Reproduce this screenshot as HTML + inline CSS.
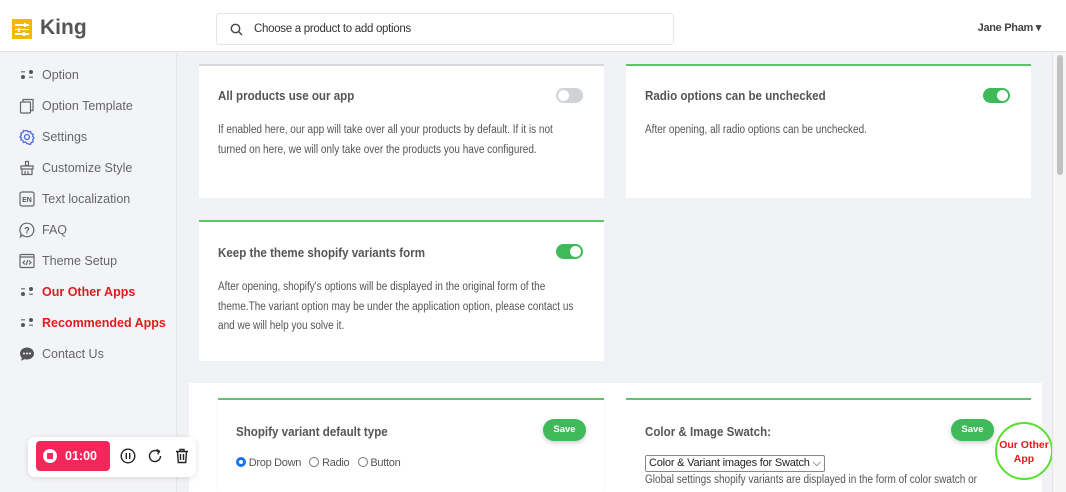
<!DOCTYPE html>
<html><head><style>
*{box-sizing:border-box;margin:0;padding:0}
body{width:1066px;height:492px;overflow:hidden;font-family:"Liberation Sans",Arial,sans-serif;background:#f1f2f6;position:relative;color:#555}
.hdr{position:absolute;left:0;top:0;width:1066px;height:52px;background:#fff;border-bottom:1px solid #dfe1e5}
.logo{position:absolute;left:12px;top:19px;width:20px;height:20px;background:#f5b800}
.logo i{position:absolute;left:3px;width:14px;height:1.5px;background:#fff}
.logo b{position:absolute;width:2px;height:4px;background:#fff}
.kt{position:absolute;left:40px;top:16px;font-size:21px;font-weight:bold;color:#555}
.search{position:absolute;left:216px;top:13px;width:458px;height:32px;border:1px solid #e3e5e8;border-radius:3px;background:#fff}
.search span{position:absolute;left:37px;top:9px;font-size:11.5px;color:#333;letter-spacing:-.3px}
.user{position:absolute;right:25px;top:21px;font-size:11px;color:#444;letter-spacing:-.3px;font-weight:bold}
.side{position:absolute;left:0;top:53px;width:177px;height:439px;background:#f3f4f7;border-right:1px solid #e4e5e8}
.it{position:absolute;left:42px;font-size:12.5px;color:#666}
.it.red{color:#e01b1b;font-weight:bold}
.ic{position:absolute;left:19px;width:16px;height:16px}
.card{position:absolute;background:#fff;border-top:2px solid #5cc46a}
.card.g{border-top-color:#d5d8dc}
.t{position:absolute;font-size:13px;font-weight:bold;color:#555;transform:scaleX(.89);transform-origin:left;white-space:nowrap}
.p{position:absolute;font-size:11.5px;color:#555;line-height:19.5px;transform:scaleX(.87);transform-origin:left;white-space:nowrap}
.tg{position:absolute;width:27px;height:15px;border-radius:8px;background:#3fb95a}
.tg::after{content:"";position:absolute;right:2px;top:2px;width:11px;height:11px;border-radius:50%;background:#fff}
.tg.off{background:#cfd2d6}
.tg.off::after{left:2px;right:auto}
.save{position:absolute;width:43px;height:22px;border-radius:11px;background:#3fb95a;color:#fff;font-size:9.5px;font-weight:bold;text-align:center;line-height:22px;box-shadow:0 2px 5px rgba(0,0,0,.2)}
.scroll{position:absolute;left:1052px;top:53px;width:14px;height:439px;background:#f5f5f5;border-left:1px solid #e5e5e5}
.scroll i{position:absolute;left:4px;top:2px;width:6px;height:120px;border-radius:3px;background:#c1c1c1}
</style></head><body>
<div class="hdr">
 <div class="logo"><i style="top:5px"></i><i style="top:9.5px"></i><i style="top:14px"></i><b style="left:12px;top:4px"></b><b style="left:6px;top:8.5px"></b><b style="left:11px;top:13px"></b></div>
 <div class="kt">King</div>
 <div class="search"><svg style="position:absolute;left:13px;top:9px" width="13" height="13" viewBox="0 0 13 13"><circle cx="5.5" cy="5.5" r="4.2" fill="none" stroke="#444" stroke-width="1.4"/><path d="M8.5 8.5L12 12" stroke="#444" stroke-width="1.4"/></svg><span>Choose a product to add options</span></div>
 <div class="user">Jane Pham ▾</div>
</div>
<div class="side">
 <svg class="ic" style="top:14px" viewBox="0 0 16 16"><circle cx="4" cy="10" r="2" fill="#555"/><circle cx="12" cy="5" r="2" fill="#555"/><rect x="2" y="4" width="4" height="1.5" fill="#888"/><rect x="10" y="9.5" width="4" height="1.5" fill="#888"/></svg><div class="it" style="top:15px">Option</div>
 <svg class="ic" style="top:45px" viewBox="0 0 16 16" fill="none" stroke="#666" stroke-width="1.2"><rect x="1.5" y="4" width="10" height="11" rx="1"/><path d="M4 4V1.5h10v11h-2.5"/></svg><div class="it" style="top:46px">Option Template</div>
 <svg class="ic" style="top:76px" viewBox="0 0 16 16" fill="none" stroke="#4b6bd6" stroke-width="1.3"><circle cx="8" cy="8" r="2.5"/><path d="M8 1.5l1.5 1.5 2-.5.7 2 2 .8-.5 2 1.3 1.7-1.3 1.7.5 2-2 .8-.7 2-2-.5L8 14.5l-1.5-1.5-2 .5-.7-2-2-.8.5-2L1 8l1.3-1.7-.5-2 2-.8.7-2 2 .5z"/></svg><div class="it" style="top:77px">Settings</div>
 <svg class="ic" style="top:107px" viewBox="0 0 16 16" fill="none" stroke="#666" stroke-width="1.2"><path d="M6.5 1.5h3v4h-3z M2 6h12v3H2z M3 9v5.5h10V9 M6 11v3.5 M9 11v3.5"/></svg><div class="it" style="top:108px">Customize Style</div>
 <svg class="ic" style="top:138px" viewBox="0 0 16 16"><rect x="1" y="1" width="14" height="14" rx="2" fill="none" stroke="#666" stroke-width="1.2"/><text x="8" y="11" font-size="7" font-weight="bold" text-anchor="middle" fill="#555" font-family="Liberation Sans">EN</text></svg><div class="it" style="top:139px">Text localization</div>
 <svg class="ic" style="top:169px" viewBox="0 0 16 16"><path d="M8 1.2a6.8 6.8 0 1 1-4.5 11.9L1.5 14.8l.6-3A6.8 6.8 0 0 1 8 1.2z" fill="none" stroke="#666" stroke-width="1.2"/><text x="8" y="11.5" font-size="9" font-weight="bold" text-anchor="middle" fill="#555" font-family="Liberation Sans">?</text></svg><div class="it" style="top:170px">FAQ</div>
 <svg class="ic" style="top:200px" viewBox="0 0 16 16" fill="none" stroke="#666" stroke-width="1.2"><rect x="1" y="1.5" width="14" height="13" rx="1"/><path d="M1 4h14 M6 7.5L4 9.5l2 2 M10 7.5l2 2-2 2 M8.8 7l-1.6 5"/></svg><div class="it" style="top:201px">Theme Setup</div>
 <svg class="ic" style="top:231px" viewBox="0 0 16 16"><circle cx="4" cy="10" r="2" fill="#555"/><circle cx="12" cy="5" r="2" fill="#555"/><rect x="2" y="4" width="4" height="1.5" fill="#888"/><rect x="10" y="9.5" width="4" height="1.5" fill="#888"/></svg><div class="it red" style="top:232px">Our Other Apps</div>
 <svg class="ic" style="top:262px" viewBox="0 0 16 16"><circle cx="4" cy="10" r="2" fill="#555"/><circle cx="12" cy="5" r="2" fill="#555"/><rect x="2" y="4" width="4" height="1.5" fill="#888"/><rect x="10" y="9.5" width="4" height="1.5" fill="#888"/></svg><div class="it red" style="top:263px">Recommended Apps</div>
 <svg class="ic" style="top:293px" viewBox="0 0 16 16"><path d="M8 1.5c3.9 0 7 2.6 7 6s-3.1 6-7 6c-.9 0-1.7-.1-2.5-.4L2 14.8l.9-3A5.7 5.7 0 0 1 1 7.5c0-3.4 3.1-6 7-6z" fill="#555"/><circle cx="5" cy="7.5" r="1" fill="#fff"/><circle cx="8" cy="7.5" r="1" fill="#fff"/><circle cx="11" cy="7.5" r="1" fill="#fff"/></svg><div class="it" style="top:294px">Contact Us</div>
</div>

<div class="card g" style="left:199px;top:64px;width:405px;height:134px">
 <div class="t" style="left:19px;top:22px">All products use our app</div>
 <div class="tg off" style="left:357px;top:22px"></div>
 <div class="p" style="left:19px;top:55px">If enabled here, our app will take over all your products by default. If it is not<br>turned on here, we will only take over the products you have configured.</div>
</div>
<div class="card" style="left:626px;top:64px;width:405px;height:134px">
 <div class="t" style="left:19px;top:22px">Radio options can be unchecked</div>
 <div class="tg" style="left:357px;top:22px"></div>
 <div class="p" style="left:19px;top:55px">After opening, all radio options can be unchecked.</div>
</div>
<div class="card" style="left:199px;top:220px;width:405px;height:141px">
 <div class="t" style="left:19px;top:23px">Keep the theme shopify variants form</div>
 <div class="tg" style="left:357px;top:22px"></div>
 <div class="p" style="left:19px;top:56px">After opening, shopify's options will be displayed in the original form of the<br>theme.The variant option may be under the application option, please contact us<br>and we will help you solve it.</div>
</div>

<div style="position:absolute;left:189px;top:383px;width:853px;height:109px;background:#fff"></div>
<div class="card" style="left:218px;top:398px;width:386px;height:94px;box-shadow:0 0 3px rgba(0,0,0,.06)">
 <div class="t" style="left:18px;top:24px">Shopify variant default type</div>
 <div class="save" style="left:325px;top:19px">Save</div>
 <div style="position:absolute;left:18px;top:57px;font-size:11px;color:#555;letter-spacing:-.3px">
  <span style="display:inline-block;width:10px;height:10px;border-radius:50%;border:3px solid #1a73e8;vertical-align:-1px;background:#fff"></span> Drop Down &nbsp;
  <span style="display:inline-block;width:10px;height:10px;border-radius:50%;border:1px solid #777;vertical-align:-1px"></span> Radio &nbsp;
  <span style="display:inline-block;width:10px;height:10px;border-radius:50%;border:1px solid #777;vertical-align:-1px"></span> Button</div>
</div>
<div class="card" style="left:626px;top:398px;width:405px;height:94px">
 <div class="t" style="left:19px;top:24px">Color &amp; Image Swatch:</div>
 <div class="save" style="left:325px;top:19px">Save</div>
 <div style="position:absolute;left:19px;top:55px;border:1px solid #888;border-radius:2px;padding:1px 3px;font-size:11px;color:#222;letter-spacing:-.2px">Color &amp; Variant images for Swatch ⌵</div>
 <div class="p" style="left:19px;top:71px">Global settings shopify variants are displayed in the form of color swatch or</div>
</div>
<div style="position:absolute;left:995px;top:422px;width:58px;height:58px;border-radius:50%;border:2px solid #58e030;background:#fff;color:#e01b1b;font-size:10.5px;font-weight:bold;text-align:center;padding-top:14px;line-height:14px">Our Other<br>App</div>

<div style="position:absolute;left:28px;top:437px;width:168px;height:40px;background:#fff;border-radius:7px;box-shadow:0 1px 6px rgba(0,0,0,.12)">
 <div style="position:absolute;left:8px;top:4px;width:74px;height:30px;background:#f5265a;border-radius:4px;color:#fff;font-size:12.5px;font-weight:bold">
  <span style="position:absolute;left:7px;top:8px;width:14px;height:14px;border-radius:50%;background:#fff"></span><span style="position:absolute;left:11px;top:12px;width:6px;height:6px;background:#f5265a;border-radius:1px"></span>
  <span style="position:absolute;left:29px;top:8px">01:00</span></div>
 <svg style="position:absolute;left:92px;top:11px" width="16" height="16" viewBox="0 0 16 16" fill="none" stroke="#222" stroke-width="1.4"><circle cx="8" cy="8" r="6.8"/><path d="M6.3 5v6M9.7 5v6"/></svg>
 <svg style="position:absolute;left:119px;top:11px" width="16" height="16" viewBox="0 0 16 16" fill="none" stroke="#222" stroke-width="1.4"><path d="M13.5 8A5.5 5.5 0 1 1 11.5 3.8"/><path d="M9.5 1.5l3 1.8-1.8 3" /></svg>
 <svg style="position:absolute;left:147px;top:11px" width="14" height="16" viewBox="0 0 14 16" fill="none" stroke="#222" stroke-width="1.4"><path d="M1 3.5h12M5 3.5V1.5h4v2M2.5 3.5l.8 11h7.4l.8-11M5.5 6v6M8.5 6v6"/></svg>
</div>
<div class="scroll"><i></i></div>
</body></html>
